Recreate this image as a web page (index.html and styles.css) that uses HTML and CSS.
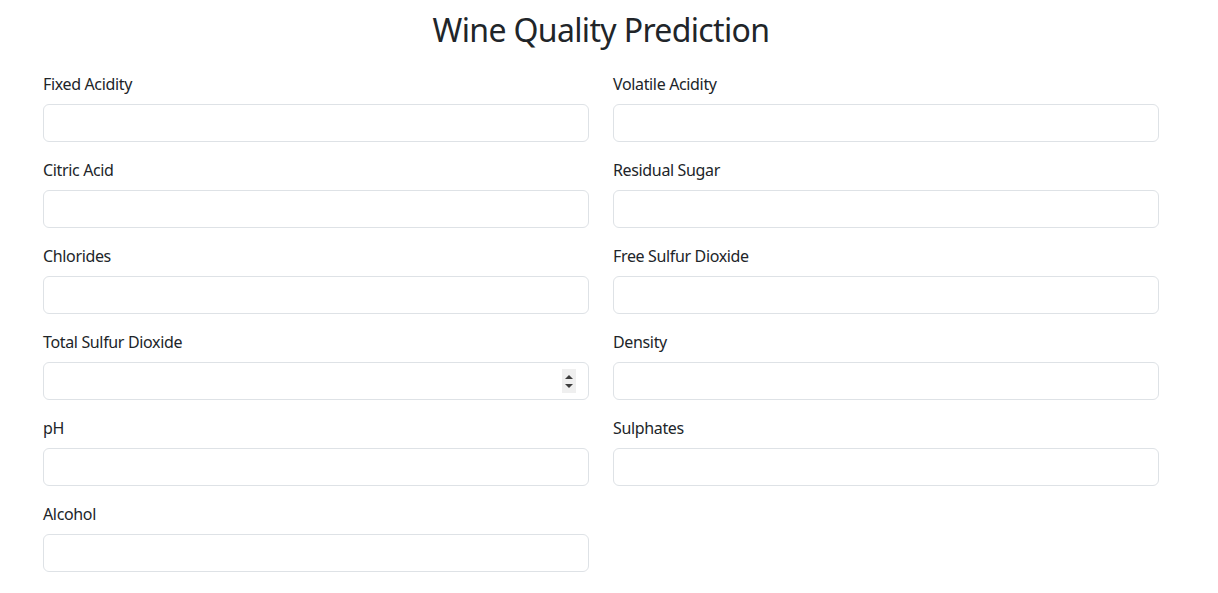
FILE: index.html
```html
<!DOCTYPE html>
<html lang="en">
<head>
<meta charset="utf-8">
<title>Wine Quality Prediction</title>
<link rel="stylesheet" href="styles.css">
</head>
<body>
<main class="page">
  <h1 class="title">Wine Quality Prediction</h1>
  <form class="form-grid">
    <div class="field"><label class="label">Fixed Acidity</label><input class="input" type="text"></div>
    <div class="field"><label class="label">Volatile Acidity</label><input class="input" type="text"></div>
    <div class="field"><label class="label">Citric Acid</label><input class="input" type="text"></div>
    <div class="field"><label class="label">Residual Sugar</label><input class="input" type="text"></div>
    <div class="field"><label class="label">Chlorides</label><input class="input" type="text"></div>
    <div class="field"><label class="label">Free Sulfur Dioxide</label><input class="input" type="text"></div>
    <div class="field"><label class="label">Total Sulfur Dioxide</label>
      <div class="input-wrap"><input class="input" type="text"><span class="spinner"><span class="tri up"></span><span class="tri down"></span></span></div>
    </div>
    <div class="field"><label class="label">Density</label><input class="input" type="text"></div>
    <div class="field"><label class="label">pH</label><input class="input" type="text"></div>
    <div class="field"><label class="label">Sulphates</label><input class="input" type="text"></div>
    <div class="field"><label class="label">Alcohol</label><input class="input" type="text"></div>
  </form>
</main>
</body>
</html>
```
FILE: styles.css
```css
* { box-sizing: border-box; }
html, body { margin: 0; padding: 0; background: #fff; }
body {
  font-family: "Noto Sans", "DejaVu Sans", sans-serif;
  color: #212529;
  font-size: 16px;
  line-height: 1.5;
}
.page {
  padding: 8px 59px 0 43px;
}
.title {
  margin: 0 0 20px;
  font-size: 32px;
  font-weight: 400;
  line-height: 44px;
  letter-spacing: -0.65px;
  text-align: center;
}
.form-grid {
  display: grid;
  grid-template-columns: 546px 546px;
  column-gap: 24px;
  row-gap: 16px;
}
.field { display: flex; flex-direction: column; }
.label { display: block; margin-bottom: 8px; line-height: 24px; letter-spacing: -0.35px; }
.input {
  display: block;
  width: 100%;
  height: 38px;
  border: 1px solid #dee2e6;
  border-radius: 6px;
  background: #fff;
  font: inherit;
  padding: 6px 12px;
  outline: none;
}
.input-wrap { position: relative; }
.spinner {
  position: absolute;
  right: 13px;
  top: 7px;
  width: 14px;
  height: 24px;
  background: #efefef;
  display: flex;
  flex-direction: column;
  align-items: center;
  justify-content: center;
  gap: 5px;
}
.tri { width: 0; height: 0; border-left: 4px solid transparent; border-right: 4px solid transparent; }
.tri.up { border-bottom: 4px solid #3c3c3c; }
.tri.down { border-top: 4px solid #3c3c3c; }
```
